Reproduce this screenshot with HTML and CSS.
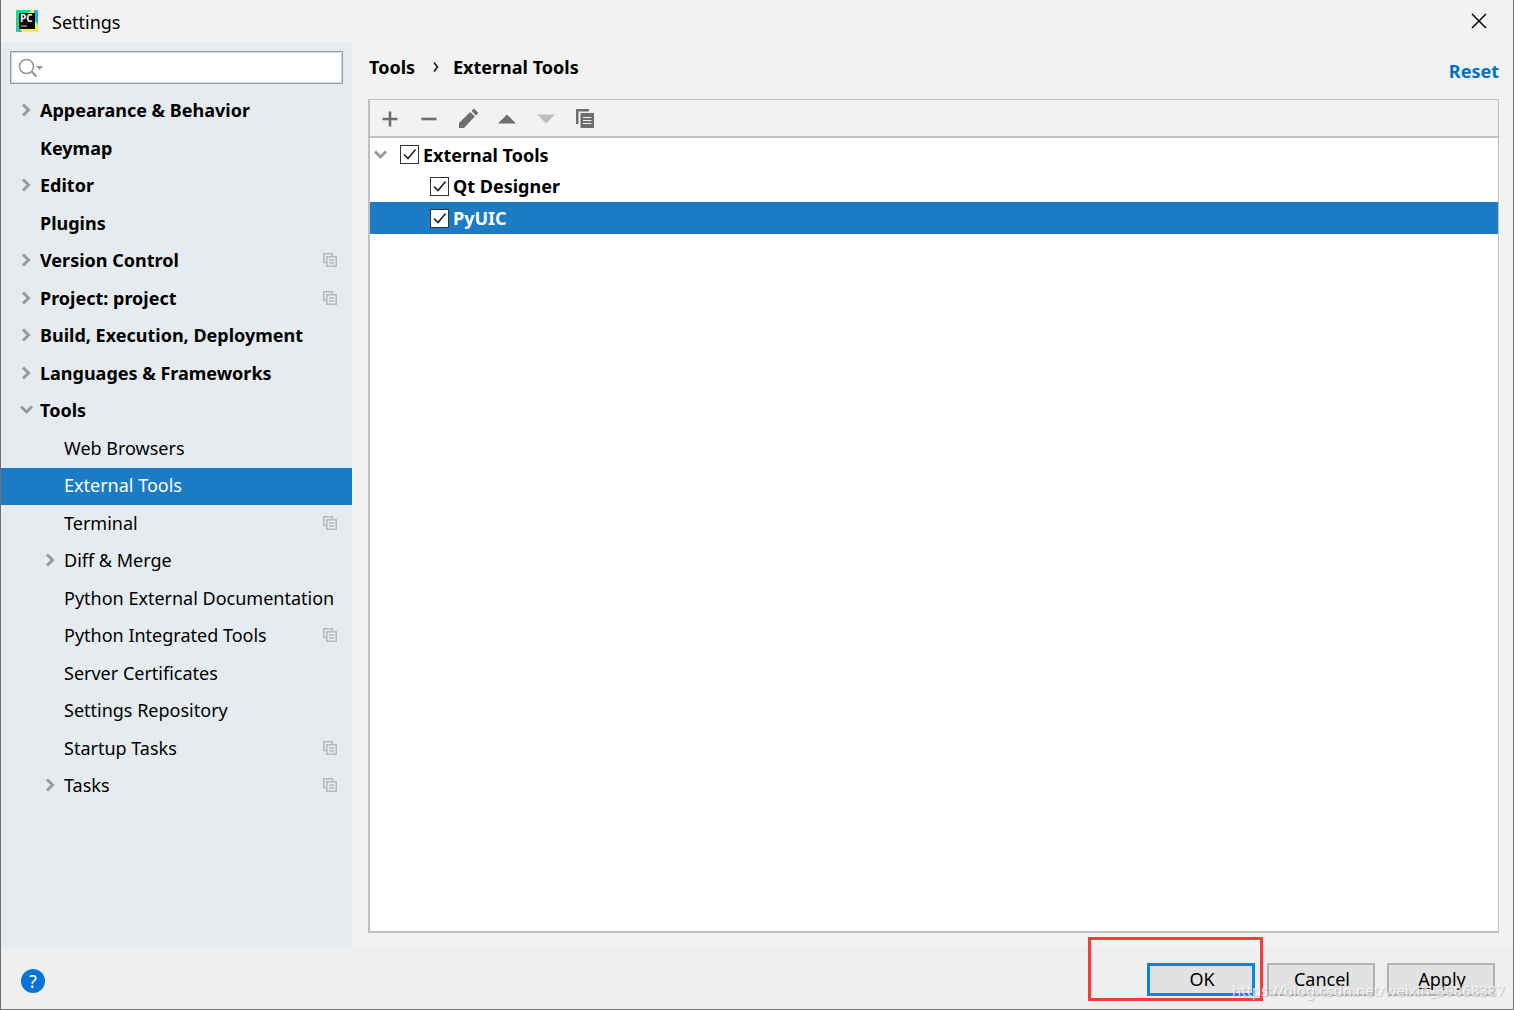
FILE: index.html
```html
<!DOCTYPE html>
<html lang="en">
<head>
<meta charset="utf-8">
<title>Settings</title>
<link rel="stylesheet" href="styles.css">
</head>
<body>
<svg class="defs" aria-hidden="true">
  <symbol id="right" viewBox="0 0 14 14"><path d="M3 1.500 8.500 7 3 12.500" fill="none" stroke="currentColor" stroke-width="3"/></symbol>
  <symbol id="down" viewBox="0 0 14 14"><path d="M1 3.500 6.500 9 12 3.500" fill="none" stroke="currentColor" stroke-width="3"/></symbol>
  <symbol id="project" viewBox="0 0 14 14"><path d="M3 9.500H.75V.75h8.750V3M3.750 3.750h9.500v9.500h-9.500zM6 7h5M6 10h5" fill="none" stroke="currentColor" stroke-width="1.500"/></symbol>
</svg>
<div class="window">
  <header class="titlebar">
    <svg class="logo" viewBox="0 0 22 22" aria-hidden="true">
      <path d="M0 0h22v22H0z" fill="#21d789"/>
      <path d="M12 3 15 0h3l3 13 1 2v7H5l-2-4z" fill="#f3f04b"/>
      <path d="M18 0h4v15l-4-6z" fill="#12b5e8"/>
      <path d="M0 14v8h6l-2-4z" fill="#20d2a8"/>
      <path d="M3 3h16v16H3z" fill="#080808"/>
      <path d="M5 16h6" stroke="#ddd" stroke-width="1"/>
      <text x="4" y="12" class="logo-text">PC</text>
    </svg>
    <h1 class="title">Settings</h1>
    <button class="close" type="button" aria-label="Close"><svg viewBox="0 0 16 16"><path d="m1 1 14 14M15 1 1 15" fill="none" stroke="#111" stroke-width="1.600"/></svg></button>
  </header>
  <div class="content">
    <aside class="sidebar">
      <div class="search">
        <svg viewBox="0 0 26 20" aria-hidden="true"><circle cx="8.500" cy="8.500" r="7" fill="none" stroke="#8d989e" stroke-width="1.600"/><path d="m13.500 13.500 5 5" stroke="#8d989e" stroke-width="2.200"/><path d="M18 8h7l-3.500 4z" fill="#8d989e"/></svg>
        <input type="text" aria-label="Search settings">
      </div>
      <nav class="nav" aria-label="Settings categories">
        <a class="item top" href="#"><svg class="arrow"><use href="#right"/></svg><span>Appearance &amp; Behavior</span></a>
        <a class="item top" href="#"><span>Keymap</span></a>
        <a class="item top" href="#"><svg class="arrow"><use href="#right"/></svg><span>Editor</span></a>
        <a class="item top" href="#"><span>Plugins</span></a>
        <a class="item top" href="#"><svg class="arrow"><use href="#right"/></svg><span>Version Control</span><svg class="scope"><use href="#project"/></svg></a>
        <a class="item top" href="#"><svg class="arrow"><use href="#right"/></svg><span>Project: project</span><svg class="scope"><use href="#project"/></svg></a>
        <a class="item top" href="#"><svg class="arrow"><use href="#right"/></svg><span>Build, Execution, Deployment</span></a>
        <a class="item top" href="#"><svg class="arrow"><use href="#right"/></svg><span>Languages &amp; Frameworks</span></a>
        <a class="item top" href="#"><svg class="arrow"><use href="#down"/></svg><span>Tools</span></a>
        <a class="item sub" href="#"><span>Web Browsers</span></a>
        <a class="item sub selected" href="#" aria-current="page"><span>External Tools</span></a>
        <a class="item sub" href="#"><span>Terminal</span><svg class="scope"><use href="#project"/></svg></a>
        <a class="item sub" href="#"><svg class="arrow"><use href="#right"/></svg><span>Diff &amp; Merge</span></a>
        <a class="item sub" href="#"><span>Python External Documentation</span></a>
        <a class="item sub" href="#"><span>Python Integrated Tools</span><svg class="scope"><use href="#project"/></svg></a>
        <a class="item sub" href="#"><span>Server Certificates</span></a>
        <a class="item sub" href="#"><span>Settings Repository</span></a>
        <a class="item sub" href="#"><span>Startup Tasks</span><svg class="scope"><use href="#project"/></svg></a>
        <a class="item sub" href="#"><svg class="arrow"><use href="#right"/></svg><span>Tasks</span><svg class="scope"><use href="#project"/></svg></a>
      </nav>
    </aside>
    <main class="main">
      <div class="heading">
        <div class="crumbs"><span>Tools</span><svg viewBox="0 0 6 10" aria-hidden="true"><path d="m1 .5 3.500 4.500L1 9.500" fill="none" stroke="#111" stroke-width="1.500"/></svg><span>External Tools</span></div>
        <a class="reset" href="#">Reset</a>
      </div>
      <section class="panel">
        <div class="toolbar">
          <button type="button" aria-label="Add"><svg viewBox="0 0 20 20"><path d="M10 2.500v15M2.500 10h15" stroke="#6e6e6e" stroke-width="2.600"/></svg></button>
          <button type="button" aria-label="Remove"><svg viewBox="0 0 20 20"><path d="M2.500 10h15" stroke="#6e6e6e" stroke-width="2.600"/></svg></button>
          <button type="button" aria-label="Edit"><svg viewBox="0 0 20 20"><path d="M1 19v-5L12.300 3l4.500 4.500L6 19zM13.500 1.900 15 .4c.6-.5 1.300-.5 1.900 0l2.700 2.700c.5.600.5 1.200 0 1.800L18 6.400z" fill="#6e6e6e"/></svg></button>
          <button type="button" aria-label="Move up"><svg viewBox="0 0 20 20"><path d="M10 5.500 19 14.500H1z" fill="#6e6e6e"/></svg></button>
          <button type="button" aria-label="Move down" disabled><svg viewBox="0 0 20 20"><path d="M1 5.500h18L10 14.500z" fill="#bdbdbd"/></svg></button>
          <button type="button" aria-label="Copy"><svg viewBox="0 0 20 20"><path d="M1 0h13v2.500H3.500V15H1zM5.500 4H19v15H5.500z" fill="#6e6e6e"/><path d="M8 8.500h8.500M8 11.500h8.500M8 14.500h8.500" stroke="#f2f2f2" stroke-width="1.200"/></svg></button>
        </div>
        <div class="tree">
          <div class="node root"><svg class="arrow"><use href="#down"/></svg><label><input type="checkbox" checked>External Tools</label></div>
          <div class="node leaf"><label><input type="checkbox" checked>Qt Designer</label></div>
          <div class="node leaf selected"><label><input type="checkbox" checked>PyUIC</label></div>
        </div>
      </section>
    </main>
  </div>
  <footer class="footer">
    <button class="help" type="button" aria-label="Help">?</button>
    <div class="ok-wrap"><button class="btn primary" type="button">OK</button><span class="mark"></span></div>
    <button class="btn" type="button">Cancel</button>
    <button class="btn" type="button"><u>A</u>pply</button>
    <span class="watermark">https://blog.csdn.net/weixin_39868387</span>
  </footer>
</div>
</body>
</html>
```
FILE: styles.css
```css
* { box-sizing: border-box; }
body {
  margin: 0;
  font: 18px/24px "Noto Sans", "Open Sans", sans-serif;
  color: #000;
}
button, input { font: inherit; color: inherit; margin: 0; }
a { color: inherit; text-decoration: none; }
svg { display: block; flex: none; }
.defs { position: absolute; width: 0; height: 0; }

.window {
  display: flex;
  flex-direction: column;
  min-height: 100vh;
  background: #f2f2f2;
  border: 1px solid #6f6f6f;
  border-top: 0;
}

.titlebar {
  display: flex;
  align-items: center;
  height: 42px;
  padding: 0 26px 0 15px;
}
.logo { width: 22px; height: 22px; }
.logo-text { font: 700 10px "Open Sans", sans-serif; fill: #fff; }
.title { flex: 1; margin: 2px 0 0 14px; font-size: 18px; font-weight: 400; }
.close { padding: 0; border: 0; background: none; }
.close svg { width: 16px; height: 16px; }

.content { display: flex; flex: 1; }
.sidebar {
  flex: none;
  width: 351px;
  padding-top: 9px;
  background: #e6ebef;
}
.search {
  display: flex;
  align-items: center;
  height: 33px;
  margin: 0 9px 9px;
  padding-left: 7px;
  background: #fff;
  border: 1px solid #9a9da0;
  box-shadow: inset 0 0 0 1px #d4d6d8;
}
.search svg { width: 26px; height: 20px; }
.search input {
  flex: 1;
  min-width: 0;
  height: 28px;
  border: 0;
  outline: 0;
  background: none;
}

.item {
  display: flex;
  align-items: center;
  height: 38px;
  padding: 0 15px 2px 39px;
  white-space: nowrap;
}
.item:nth-child(odd) { height: 37px; padding-bottom: 3px; }
.item.top { font-weight: 700; }
.item.sub { padding-left: 63px; }
.item.selected { background: #1b7bc4; color: #fff; }
.arrow { width: 14px; height: 14px; color: #999; }
.item .arrow { margin: 0 6px 0 -20px; }
.scope { width: 14px; height: 14px; margin-left: auto; color: #b0bac0; }

.main {
  display: flex;
  flex: 1;
  flex-direction: column;
  min-width: 0;
  padding: 13px 14px 15px 16px;
}
.heading {
  display: flex;
  justify-content: space-between;
  height: 44px;
  font-weight: 700;
}
.crumbs { display: flex; align-items: center; height: 24px; padding-left: 1px; }
.crumbs svg { width: 6px; height: 10px; margin: 0 14px 0 18px; }
.reset { margin-top: 4px; color: #006fcb; }

.panel {
  display: flex;
  flex: 1;
  flex-direction: column;
  background: #fff;
  border: solid #c0c0c0;
  border-width: 1px 1px 2px 2px;
}
.toolbar {
  display: flex;
  gap: 19px;
  height: 38px;
  padding: 9px 10px;
  background: #f2f2f2;
  border-bottom: 2px solid #c0c0c0;
}
.toolbar button { padding: 0; border: 0; background: none; }
.toolbar svg { width: 20px; height: 20px; }

.tree { font-weight: 700; }
.node { display: flex; align-items: center; height: 32px; }
.node.root { padding: 1px 0 0 4px; }
.node.root .arrow { margin-right: 12px; }
.node.leaf { padding-left: 60px; }
.node.selected { background: #1b7bc4; color: #fff; }
.node label { display: flex; align-items: center; gap: 4px; }
.node input {
  width: 19px;
  height: 19px;
  appearance: none;
  border: 1px solid #333;
  background: #fff;
}
.node input:checked {
  background: #fff url("data:image/svg+xml,%3Csvg xmlns='http://www.w3.org/2000/svg' viewBox='0 0 17 17'%3E%3Cpath d='M3 8.500l4 4 7.500-9' fill='none' stroke='%23222' stroke-width='1.600'/%3E%3C/svg%3E");
}

.footer {
  position: relative;
  display: flex;
  align-items: center;
  gap: 12px;
  height: 61px;
  padding: 2px 18px 0 20px;
  background: #efefef;
}
.help {
  width: 24px;
  height: 24px;
  margin: 2px auto 0 0;
  padding: 0;
  border: 0;
  border-radius: 50%;
  background: #0874da;
  color: #fff;
  line-height: 24px;
}
.btn {
  display: block;
  width: 108px;
  height: 33px;
  padding: 0 0 2px 2px;
  border: 2px solid #b2b2b2;
  background: #e2e2e2;
  line-height: 24px;
}
.btn.primary { border: 3px solid #0a84e2; }
.btn u { text-decoration-thickness: 1px; text-underline-offset: 2px; }
.ok-wrap { position: relative; }
.mark {
  position: absolute;
  inset: -26px -8px -5px -59px;
  border: 3px solid #fb3b3b;
  pointer-events: none;
}
.watermark {
  position: absolute;
  right: 8px;
  bottom: 7px;
  font: 15px/24px "Noto Sans", sans-serif;
  color: rgba(255, 255, 255, .75);
  text-shadow: 1px 1px 1px rgba(120, 120, 120, .4);
  pointer-events: none;
}
```
